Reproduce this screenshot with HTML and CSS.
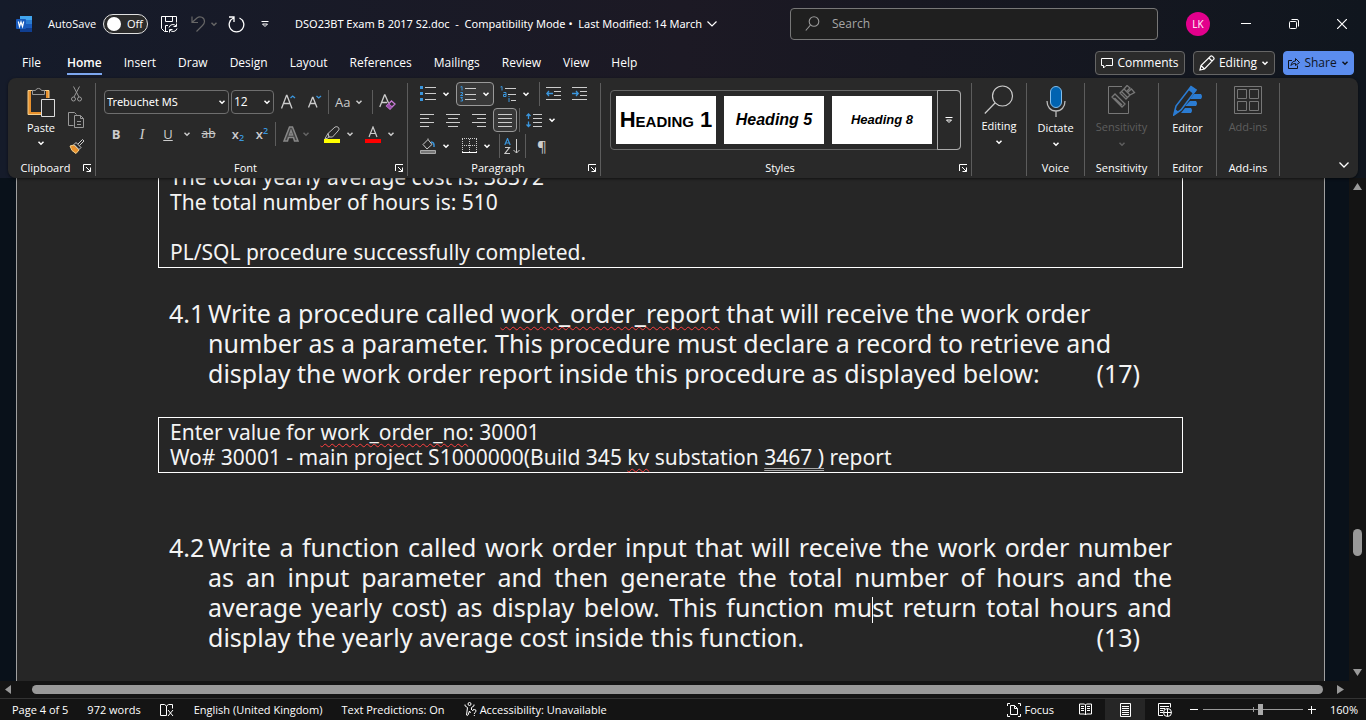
FILE: index.html
```html
<!DOCTYPE html>
<html lang="en-GB">
<head>
<meta charset="utf-8">
<title>DSO23BT Exam B 2017 S2.doc</title>
<link rel="stylesheet" href="styles.css">
</head>
<body>
<svg class="defs" aria-hidden="true">
  <symbol id="chev" viewBox="0 0 8 8"><path d="M1.5 2.8 4 5.2 6.500 2.800" fill="none" stroke="currentColor" stroke-width="1.500"/></symbol>
  <symbol id="launch" viewBox="0 0 9 9"><path d="M.5 7V.5H8M3 3l4.500 4.500M7.500 3.500v4h-4" fill="none" stroke="currentColor"/></symbol>
  <symbol id="overflow" viewBox="0 0 8 8"><path d="M.5 1.500h7" stroke="currentColor"/><path d="M1.500 4 4 6.500 6.500 4z" fill="none" stroke="currentColor"/></symbol>
</svg>
<div class="app">
  <header class="titlebar">
    <div class="quick">
      <svg class="word" width="17" height="16" viewBox="0 0 17 16"><path d="M4 0h12v4H4z" fill="#41a5ee"/><path d="M4 4h12v4H4z" fill="#2b7cd3"/><path d="M4 8h12v4H4z" fill="#185abd"/><path d="M4 12h12v4H4z" fill="#103f91"/><rect y="3" width="10" height="10" rx="1" fill="#185abd"/><path d="m2.300 5.500 1.200 5L5 6l1.500 4.500 1.200-5" fill="none" stroke="#fff" stroke-width="1.200"/></svg>
      <label class="autosave">AutoSave <input type="checkbox" role="switch"><span class="toggle"><span class="knob"></span>Off</span></label>
      <button class="ib save" aria-label="Save"><svg width="17" height="17" viewBox="0 0 17 17" fill="none" stroke="currentColor"><path d="M7 15.500H3.500l-3-3V.5h15v6M4.500.5v5h7v-5M4.500 15.500v-6H7"/><path d="M8 11.500a4 4 0 0 1 7-1.500M15.500 7.500V10.500h-3M16 12.500a4 4 0 0 1-7 1.500M8.500 16.500v-3h3"/></svg></button>
      <button class="ib undo" aria-label="Undo"><svg width="15" height="16" viewBox="0 0 15 16" fill="none" stroke="currentColor" stroke-width="1.200"><path d="M1 .5v6h6M1.500 6 6 2c3-2.500 7.500-.5 7.500 3.500 0 2-1 3-2 4L5.500 15.500"/></svg></button>
      <svg class="c dim"><use href="#chev"/></svg>
      <button class="ib redo" aria-label="Repeat"><svg width="17" height="17" viewBox="0 0 17 17" fill="none" stroke="currentColor" stroke-width="1.300"><path d="M11.500 2A7.300 7.300 0 1 1 5.500 2M1 1h5v5"/></svg></button>
      <button class="ib" aria-label="Customize toolbar"><svg class="c"><use href="#overflow"/></svg></button>
    </div>
    <button class="doctitle">DSO23BT Exam B 2017 S2.doc&nbsp; -&nbsp; Compatibility Mode&nbsp;•&nbsp; Last Modified: 14 March <svg width="10" height="6" viewBox="0 0 10 6"><path d="m.5.5 4.500 4.500L9.500.5" fill="none" stroke="currentColor" stroke-width="1.200"/></svg></button>
    <label class="search"><svg width="15" height="16" viewBox="0 0 15 16" fill="none" stroke="#999" stroke-width="1.100"><circle cx="9" cy="5.500" r="4.800"/><path d="M5.500 9 .8 14.500"/></svg><input type="text" placeholder="Search" aria-label="Search"></label>
    <div class="win">
      <button class="avatar">LK</button>
      <button class="ib" aria-label="Minimize"><svg width="10" height="10"><path d="M0 4.500h10" stroke="currentColor"/></svg></button>
      <button class="ib" aria-label="Restore"><svg width="10" height="10" viewBox="0 0 10 10" fill="none" stroke="currentColor"><rect x=".5" y="2.500" width="7" height="7" rx="1"/><path d="M2.500.5H8A1.500 1.500 0 0 1 9.500 2v5.500"/></svg></button>
      <button class="ib" aria-label="Close"><svg width="10" height="10"><path d="m0 0 10 10M10 0 0 10" stroke="currentColor" stroke-width="1.200"/></svg></button>
    </div>
  </header>
  <nav class="tabs">
    <div class="tablist">
      <button class="file">File</button><button class="active">Home</button><button>Insert</button><button>Draw</button><button>Design</button><button>Layout</button><button>References</button><button>Mailings</button><button>Review</button><button>View</button><button>Help</button>
    </div>
    <div class="actions">
      <button class="comments"><svg width="12" height="11" viewBox="0 0 12 11" fill="none" stroke="currentColor"><path d="M.5.5h11v7H5l-2.500 2.500V7.500h-2z"/></svg>Comments</button>
      <button class="mode"><svg width="16" height="16" viewBox="0 0 16 16" fill="none" stroke="currentColor" stroke-width="1.200"><path d="m1 15 1-4.500L11.500 1.200q1-.8 2 .2l1 1q1 1 .2 2L5.500 14zM10 3l3 3M2 10.500 5.500 14"/></svg>Editing<svg class="c"><use href="#chev"/></svg></button>
      <button class="share"><svg width="12" height="12" viewBox="0 0 12 12" fill="none" stroke="currentColor"><path d="M4 3.500H.5v8h9V8.500M3 8.500c.5-3 2-4.500 4.500-4.500V1.500l4 4-4 3V6.500C5.500 6.500 4 7 3 8.500z"/></svg>Share<svg class="c"><use href="#chev"/></svg></button>
    </div>
  </nav>
  <section class="ribbon" aria-label="Home ribbon">
    <div class="group clipboard">
      <div class="body">
        <button class="big"><svg width="28" height="32" viewBox="0 0 28 32"><path d="M2.500 5v22.500H14M20.500 12V5" fill="none" stroke="#e8912d" stroke-width="3"/><path d="M1 4.500h7M15 4.500h7V12M1 4.500V28.500h13" fill="none" stroke="#f5cf8c"/><path d="M5.500 8.500v-4h3a3.200 3.200 0 0 1 6 0h3v4z" fill="#292929" stroke="#999"/><path d="M14.500 13.500h13v17h-13z" fill="#292929" stroke="#ddd"/></svg><span>Paste</span><svg class="c"><use href="#chev"/></svg></button>
        <div class="stack">
          <button class="ib grey" aria-label="Cut"><svg width="11" height="16" viewBox="0 0 11 16" fill="none" stroke="currentColor"><path d="M2.500.5 8 11M8.500.5 3 11"/><circle cx="2.500" cy="13" r="2"/><circle cx="8.500" cy="13" r="2"/></svg></button>
          <button class="ib grey" aria-label="Copy"><svg width="17" height="16" viewBox="0 0 17 16" fill="none" stroke="currentColor"><path d="M5.500 13.500h-5V.5h6l2 2M6.500 3.500h6l3 3v9h-9zM12.500 3.500v3h3M9 9.500h4M9 12.500h4"/></svg></button>
          <button class="ib" aria-label="Format Painter"><svg width="16" height="15" viewBox="0 0 16 15"><path d="m1 7 4-1 5 5-3 3.500L3 11.500z" fill="#e8912d" stroke="#f8d38c"/><path d="m5 5.500 2-2 5 5-2 2zM9 5l4.500-4.500 1.500 1.500L10.500 6.500" fill="#292929" stroke="#ccc"/></svg></button>
        </div>
      </div>
      <div class="caption"><span>Clipboard</span><button class="ib" aria-label="Clipboard options"><svg class="l"><use href="#launch"/></svg></button></div>
    </div>

    <div class="group font">
      <div class="body col">
        <div class="row r1">
          <span class="combo fontname"><input type="text" value="Trebuchet MS" aria-label="Font"><svg class="c"><use href="#chev"/></svg></span>
          <span class="combo fontsize"><input type="text" value="12" aria-label="Font size"><svg class="c"><use href="#chev"/></svg></span>
          <button class="ib grow" aria-label="Grow font"><svg width="15" height="16" viewBox="0 0 15 16" fill="none"><path d="m.5 14.500 5-13h.5l5 13M2.500 9.500H9" stroke="#ccc" stroke-width="1.300"/><path d="m9.500 4 2.200-2L14 4" stroke="#3a96dd" stroke-width="1.300"/></svg></button>
          <button class="ib shrink" aria-label="Shrink font"><svg width="14" height="14" viewBox="0 0 14 14" fill="none"><path d="m.5 12.500 4-10h.5l4 10M2 8.500h5.500" stroke="#ccc" stroke-width="1.300"/><path d="m8.500 1 2.200 2L13 1" stroke="#3a96dd" stroke-width="1.300"/></svg></button>
          <i class="vr"></i>
          <button class="ib case">Aa<svg class="c"><use href="#chev"/></svg></button>
          <i class="vr"></i>
          <button class="ib" aria-label="Clear formatting"><svg width="17" height="16" viewBox="0 0 17 16" fill="none"><path d="M.8 13 5.500 1H6l3.500 8M2.500 8.500H8" stroke="#ccc" stroke-width="1.300"/><path d="m7.500 12 5-5 3.500 3-5 5zM9.500 10l3.500 3" stroke="#c679d4" stroke-width="1.300"/><path d="m7.500 12 2-2 3.500 3-2 2z" fill="#9c4fb0"/></svg></button>
        </div>
        <div class="row r2">
          <button class="ib b">B</button><button class="ib i">I</button><button class="ib u">U</button><svg class="c"><use href="#chev"/></svg>
          <button class="ib strike"><s>ab</s></button><button class="ib sub">x<sub>2</sub></button><button class="ib sup">x<sup>2</sup></button>
          <i class="vr"></i>
          <button class="ib" aria-label="Text effects"><svg width="16" height="16" viewBox="0 0 16 16"><path d="M1 15 6.500 1h3L15 15h-3.500L10.500 11.500h-5L4.500 15zM6.500 9h3L8 4.500z" fill="#444" stroke="#888" stroke-width="1.500"/></svg></button>
          <svg class="c dim"><use href="#chev"/></svg>
          <button class="ib hl" aria-label="Highlight"><svg width="16" height="17" viewBox="0 0 16 17"><path d="M4 7.500 11 1q2-1 3.500.5T14 5L8.500 11H5zM4 7.500 5 11l-2 1.500H1z" fill="none" stroke="#bbb"/><path d="M0 13h16v4H0z" fill="#ff0"/></svg></button>
          <svg class="c"><use href="#chev"/></svg>
          <button class="ib hl" aria-label="Font colour"><svg width="16" height="17" viewBox="0 0 16 17"><path d="m4 11 4-10 4 10M5.500 7.500h5" fill="none" stroke="#ccc" stroke-width="1.200"/><path d="M0 13h16v4H0z" fill="red"/></svg></button>
          <svg class="c"><use href="#chev"/></svg>
        </div>
      </div>
      <div class="caption"><span>Font</span><button class="ib" aria-label="Font options"><svg class="l"><use href="#launch"/></svg></button></div>
    </div>

    <div class="group para">
      <div class="body col">
        <div class="row p1">
          <button class="ib split" aria-label="Bullets"><svg width="16" height="16" viewBox="0 0 16 16"><path d="M0 0h3v3H0zM0 6h3v3H0zM0 12h3v3H0z" fill="#3a96dd"/><path d="M5 1.500h11M5 7.500h11M5 13.500h11" stroke="#ccc"/></svg><svg class="c"><use href="#chev"/></svg></button>
          <button class="ib split on" aria-label="Numbering"><svg width="16" height="16" viewBox="0 0 16 16"><path d="M5 2.500h11M5 8.500h11M5 13.500h11" stroke="#ccc"/><path d="M.5 1 2 .5v4M.5 6.500h2v1.500l-2 1.500h2.500M.5 11.500h2l-1 1.500 1 .5v1.500H.5" fill="none" stroke="#3a96dd"/></svg><svg class="c"><use href="#chev"/></svg></button>
          <button class="ib split" aria-label="Multilevel list"><svg width="16" height="17" viewBox="0 0 16 17"><path d="M5 2.500h11M8 8.500h8M11 14.500h5" stroke="#ccc"/><path d="M.5 1 2 .5v4M3.500 6.500h2.500v4H3.500V8.500H6M9 12v4M9 10v1" fill="none" stroke="#3a96dd"/></svg><svg class="c"><use href="#chev"/></svg></button>
          <i class="vr"></i>
          <button class="ib" aria-label="Decrease indent"><svg width="15" height="14" viewBox="0 0 15 14" fill="none"><path d="M0 .5h15M8 4.500h7M8 8.500h7M0 12.500h15" stroke="#ccc"/><path d="M7 6.500H.8M3 4 .8 6.500 3 9" stroke="#3a96dd" stroke-width="1.300"/></svg></button>
          <button class="ib" aria-label="Increase indent"><svg width="15" height="14" viewBox="0 0 15 14" fill="none"><path d="M0 .5h15M8 4.500h7M8 8.500h7M0 12.500h15" stroke="#ccc"/><path d="M0 6.500h6.200M4 4l2.200 2.500L4 9" stroke="#3a96dd" stroke-width="1.300"/></svg></button>
        </div>
        <div class="row p2">
          <button class="ib al" aria-label="Align left"><svg width="14" height="13"><path d="M0 .5h14M0 4.500h9M0 8.500h14M0 12.500h9" stroke="#ccc"/></svg></button>
          <button class="ib al" aria-label="Centre"><svg width="14" height="13"><path d="M0 .5h14M2 4.500h10M0 8.500h14M2 12.500h10" stroke="#ccc"/></svg></button>
          <button class="ib al" aria-label="Align right"><svg width="14" height="13"><path d="M0 .5h14M5 4.500h9M0 8.500h14M5 12.500h9" stroke="#ccc"/></svg></button>
          <button class="ib al on" aria-label="Justify"><svg width="14" height="13"><path d="M0 .5h14M0 4.500h14M0 8.500h14M0 12.500h14" stroke="#ccc"/></svg></button>
          <i class="vr"></i>
          <button class="ib split" aria-label="Line spacing"><svg width="16" height="15" viewBox="0 0 16 15" fill="none"><path d="M7 1.500h9M7 5.500h9M7 9.500h9M7 13.500h9" stroke="#ccc"/><path d="M2.500 1v5M.5 3l2-2 2 2M2.500 8.500v5M.5 11.500l2 2 2-2" stroke="#3a96dd" stroke-width="1.300"/></svg><svg class="c"><use href="#chev"/></svg></button>
        </div>
        <div class="row p3">
          <button class="ib split" aria-label="Shading"><svg width="16" height="16" viewBox="0 0 16 16" fill="none"><path d="m3 6.500 5-5 4 5-5 4.500zM8 1.500V.5" stroke="#ccc"/><path d="M11 4q3.500 0 3 5" stroke="#3a96dd" stroke-width="1.500"/><path d="M.5 12.500h15v3H.5z" fill="#777" stroke="#aaa"/></svg><svg class="c"><use href="#chev"/></svg></button>
          <button class="ib split" aria-label="Borders"><svg width="15" height="16" viewBox="0 0 15 16" fill="none" stroke="#ccc"><path d="M0 .5h15M.5 1v13M14.500 1v13M7.500 1v13M0 7.500h15" stroke-dasharray="1 1"/><path d="M0 14.500h15" stroke="#fff"/></svg><svg class="c"><use href="#chev"/></svg></button>
          <i class="vr"></i>
          <button class="ib" aria-label="Sort"><svg width="17" height="17" viewBox="0 0 17 17" fill="none"><path d="m.8 7 2.700-6.500L6.200 7M1.500 5h4" stroke="#3a96dd" stroke-width="1.200"/><path d="M1 9.500h4.500l-4.500 6h5" stroke="#ccc" stroke-width="1.200"/><path d="M12.500 1v14M9.500 12l3 3 3-3" stroke="#ccc"/></svg></button>
          <i class="vr"></i>
          <button class="ib pil">¶</button>
        </div>
      </div>
      <div class="caption"><span>Paragraph</span><button class="ib" aria-label="Paragraph options"><svg class="l"><use href="#launch"/></svg></button></div>
    </div>

    <div class="group styles">
      <div class="body">
        <div class="gallery"><button class="tile h1">Heading 1</button><button class="tile h5">Heading 5</button><button class="tile h8">Heading 8</button><button class="more" aria-label="More styles"><svg class="c"><use href="#overflow"/></svg></button></div>
      </div>
      <div class="caption"><span>Styles</span><button class="ib" aria-label="Styles options"><svg class="l"><use href="#launch"/></svg></button></div>
    </div>

    <div class="group editing"><div class="body"><button class="big"><svg width="30" height="30" viewBox="0 0 30 30" fill="none" stroke="#ccc" stroke-width="1.200"><circle cx="18.500" cy="11" r="10"/><path d="M11 18 .8 28.500"/></svg><span>Editing</span><svg class="c"><use href="#chev"/></svg></button></div></div>
    <div class="group voice"><div class="body"><button class="big"><svg width="20" height="32" viewBox="0 0 20 32"><rect x="4.500" y="1.500" width="11" height="21" rx="5.500" fill="#0063b1" stroke="#83beec"/><path d="M1 16c0 6 3.500 10 9 10s9-4 9-10M10 26v6" fill="none" stroke="#bbb" stroke-width="1.300"/></svg><span>Dictate</span><svg class="c"><use href="#chev"/></svg></button></div><div class="caption"><span>Voice</span></div></div>
    <div class="group sens"><div class="body"><button class="big" disabled><svg width="28" height="30" viewBox="0 0 28 30" fill="none" stroke="#777"><path d="M14 1.500H.5v27h20V16"/><path d="m4 12 3-3 10 10-3 3zM6.500 13l7.500 7M12 8l4-4 6 6-4 4zM16 4l3-3.500 3 2.500-3 3M20 7l3.500-3 3 3.500-4.500 2.500M13.500 6.500l6 6" stroke-width="1.300"/></svg><span>Sensitivity</span><svg class="c"><use href="#chev"/></svg></button></div><div class="caption"><span>Sensitivity</span></div></div>
    <div class="group editor"><div class="body"><button class="big"><svg width="30" height="31" viewBox="0 0 30 31"><path d="M21 9h7q2 2.500 0 5H17zM17 16h6q2 2.500 0 5H12zM12 23h6q2 2.500 0 5H8z" fill="#2b7cd3"/><path d="M.8 30 3 21 18 1.500l5 3.500L8 25z" fill="#292929" stroke="#2b7cd3" stroke-width="1.600"/><path d="m15.500 5 2.500-4 5.500 4-3 4zM.8 30l1.500-6 3.500 3z" fill="#2b7cd3"/></svg><span>Editor</span></button></div><div class="caption"><span>Editor</span></div></div>
    <div class="group addins"><div class="body"><button class="big" disabled><svg width="28" height="30" viewBox="0 0 28 30" fill="none" stroke="#777"><path d="M.5 1.500h27v27H.5zM3.500 4.500h9v9h-9zM15.500 4.500h9v9h-9zM3.500 16.500h9v9h-9zM15.500 16.500h9v9h-9z"/></svg><span>Add-ins</span></button></div><div class="caption"><span>Add-ins</span></div></div>
    <div class="tail"><button class="ib" aria-label="Collapse ribbon"><svg width="10" height="6" viewBox="0 0 10 6"><path d="m.5.5 4.500 4.500L9.500.5" fill="none" stroke="currentColor" stroke-width="1.300"/></svg></button></div>
  </section>

  <main class="work">
    <article class="page">
      <div class="box first">
        <p>The total yearly average cost is: 38372</p>
        <p>The total number of hours is: 510</p>
        <p>&nbsp;</p>
        <p>PL/SQL procedure successfully completed.</p>
      </div>
      <div class="question q1"><span>4.1</span>
        <div><p>Write a procedure called <span class="sp">work_order_report</span> that will receive the work order</p><p>number as a parameter. This procedure must declare a record to retrieve and</p><p class="end"><span>display the work order report inside this procedure as displayed below:</span><span>(17)</span></p></div>
      </div>
      <div class="box second">
        <p>Enter value for <span class="sp">work_order_no</span>: 30001</p>
        <p>Wo# 30001 - main project S1000000(Build 345 <span class="sp">kv</span> substation <span class="gr">3467 )</span> report</p>
      </div>
      <div class="question q2"><span>4.2</span>
        <div><p class="just">Write a function called work order input that will receive the work order number</p><p class="just">as an input parameter and then generate the total number of hours and the</p><p class="just">average yearly cost) as display below. This function mu<span class="caret"></span>st return total hours and</p><p class="end"><span>display the yearly average cost inside this function.</span><span>(13)</span></p></div>
      </div>
    </article>
    <div class="vscroll"><svg width="9" height="7"><path d="M4.500 0 9 7H0z" fill="#999"/></svg><span class="vthumb"></span><svg width="9" height="7"><path d="M4.500 7 9 0H0z" fill="#999"/></svg></div>
  </main>
  <div class="hscroll"><svg width="6" height="9"><path d="M0 4.500 6 0v9z" fill="#999"/></svg><span class="hthumb"></span><svg width="7" height="9"><path d="M7 4.500 0 0v9z" fill="#999"/></svg></div>
  <footer class="status">
    <div class="left">
      <span>Page 4 of 5</span><span>972 words</span>
      <svg width="15" height="14" viewBox="0 0 15 14" fill="none" stroke="currentColor"><path d="M6.500 12.500h-6V1.500h4l2 1.500v9.500M6.500 3l2-1.500h4v4M8 7l5 6M13 7l-5 6"/></svg>
      <span>English (United Kingdom)</span><span>Text Predictions: On</span>
      <span class="acc"><svg width="13" height="15" viewBox="0 0 13 15" fill="none" stroke="currentColor"><circle cx="5.500" cy="2" r="1.500"/><path d="M1 2.500Q0 4 3.500 5.500L2.500 13q1 1 1.500 0l1.500-4 1 2M10 2.500Q11 4 7.500 5.500V8"/><path d="M8.500 9q0-1.500 1.800-1.500T12 9c0 1.500-1.700 1-1.700 3M10.300 13v1"/></svg>Accessibility: Unavailable</span>
    </div>
    <div class="right">
      <button class="ib focus"><svg width="14" height="14" viewBox="0 0 14 14" fill="none" stroke="currentColor"><path d="M3 .5H.5V3M11 .5h2.500V3M3 13.500H.5V11M11 13.500h2.500V11M3.500 2.500h4l3 3v6h-7zM7.500 2.500v3h3"/></svg>Focus</button>
      <button class="ib view" aria-label="Read mode"><svg width="13" height="13" viewBox="0 0 13 13" fill="none" stroke="currentColor"><path d="M.5 1h5l1 1 1-1h5v10h-5l-1 1-1-1h-5zM6.500 2v10M2 3.500h3M2 5.500h3M2 7.500h3M8 3.500h3M8 5.500h3M8 7.500h3"/></svg></button>
      <button class="ib view on" aria-label="Print layout"><svg width="11" height="14" viewBox="0 0 11 14" fill="none" stroke="currentColor"><path d="M.5.5h10v13H.5zM2 3.500h7M2 5.500h7M2 7.500h7M2 9.500h7M2 11.500h7"/></svg></button>
      <button class="ib view" aria-label="Web layout"><svg width="14" height="14" viewBox="0 0 14 14" fill="none" stroke="currentColor"><path d="M5 12.500H.5V.5h12v4M2 3.500h9M2 5.500h5M2 7.500h3M2 9.500h3"/><circle cx="9.500" cy="9.500" r="4"/><path d="M5.500 9.500h8M9.500 5.500v8"/></svg></button>
      <button class="ib zoomb" aria-label="Zoom out"><svg width="8" height="8"><path d="M0 3.500h8" stroke="currentColor"/></svg></button>
      <input class="zoom" type="range" min="0" max="100" value="58" aria-label="Zoom">
      <button class="ib zoomb" aria-label="Zoom in"><svg width="8" height="8"><path d="M0 3.500h8M3.500 0v8" stroke="currentColor"/></svg></button>
      <button class="ib pct">160%</button>
    </div>
  </footer>
</div>
</body>
</html>
```
FILE: styles.css
```css
* { box-sizing: border-box; }
body { margin: 0; background: #141414; color: #fff; font: 12px/16px "Open Sans", "Noto Sans", sans-serif; }
button, input { font: inherit; color: inherit; border: 0; background: none; padding: 0; margin: 0; }
button { white-space: nowrap; }
p { margin: 0; }
svg { flex: none; display: block; }
.defs { position: absolute; width: 0; height: 0; }
.c { width: 8px; height: 8px; }
.l { width: 9px; height: 9px; }
.dim { color: #666; }
.ib { display: inline-flex; align-items: center; justify-content: center; flex: none; }
.app { height: 100vh; display: flex; flex-direction: column; background: linear-gradient(90deg, #151b2a, #1c1924 50%, #10161e); }

.titlebar { height: 48px; flex: none; display: flex; align-items: center; padding: 0 16px; font-size: 11px; }
.quick { display: flex; align-items: center; width: 279px; flex: none; }
.autosave { display: flex; align-items: center; gap: 7px; margin-left: 15px; }
.autosave input { position: absolute; opacity: 0; }
.toggle { display: flex; align-items: center; gap: 6px; width: 45px; height: 20px; padding: 0 3px; border: 1px solid #e0e0e0; border-radius: 10px; background: #2b2b2b; }
.knob { width: 14px; height: 14px; border-radius: 50%; background: #fff; }
.save { margin-left: 13px; }
.undo { margin: 0 4px 0 13px; color: #666; }
.redo { margin: 0 16px 0 10px; }
.doctitle { display: flex; align-items: center; gap: 5px; font-family: "Noto Sans", sans-serif; }
.search { display: flex; align-items: center; gap: 12px; margin-left: auto; width: 368px; height: 32px; padding: 0 14px; border: 1px solid #777; border-radius: 4px; background: #1f1f1f; font-size: 12px; }
.search input { min-width: 0; flex: 1; }
.search input::placeholder { color: #a6a6a6; opacity: 1; }
.win { display: flex; align-items: center; gap: 38px; margin-left: 28px; padding-right: 3px; }
.avatar { width: 24px; height: 24px; margin-right: -7px; border-radius: 50%; background: #e3008c; font-size: 10px; }

.tabs { height: 30px; flex: none; display: flex; justify-content: space-between; padding: 0 12px 0 22px; }
.tablist { display: flex; gap: 22px; }
.tablist button { height: 27px; padding-top: 5px; border-bottom: 2px solid transparent; }
.tablist .file { margin-right: 4px; }
.tablist .active { font-weight: 600; border-color: #7da7f0; }
.actions { display: flex; gap: 8px; padding-top: 3px; }
.actions button { display: flex; align-items: center; justify-content: center; gap: 4px; height: 24px; padding: 0 4px; border: 1px solid #666; border-radius: 4px; background: #2b2b2b; }
.comments { width: 90px; }
.mode { width: 82px; }
.actions .share { width: 71px; background: #5b8def; border-color: #5b8def; color: #10141c; }

.ribbon { height: 100px; flex: none; margin: 0 8px; display: flex; background: #292929; border-radius: 8px; padding: 5px 0 2px; position: relative; z-index: 1; font-size: 11px; box-shadow: 0 1px 3px #0008; }
.group { display: flex; flex-direction: column; flex: none; border-right: 1px solid #5c5c5c; }
.body { flex: 1; display: flex; min-height: 0; }
.col { flex-direction: column; }
.row { display: flex; align-items: center; }
.caption { display: flex; height: 16px; align-items: center; padding-right: 3px; }
.caption span { flex: 1; text-align: center; }
.clipboard { width: 88px; }
.font { width: 312px; }
.para { width: 193px; }
.styles { flex: 1 1 371px; }
.editing { width: 55px; }
.voice { width: 58px; }
.sens { width: 74px; }
.editor { width: 58px; }
.addins { width: 63px; }
.voice .caption, .sens .caption, .editor .caption, .addins .caption { padding: 0; }
.big { flex: 1; display: flex; flex-direction: column; align-items: center; gap: 3px; padding-top: 2px; }
.big:disabled { color: #5e5e5e; }
.sens .big, .editor .big, .addins .big { gap: 4px; }
.big .c { margin-top: 1px; }
.clipboard .big { gap: 2px; padding: 3px 0 0 9px; flex: none; width: 57px; }
.stack { display: flex; flex-direction: column; align-items: center; gap: 10px; padding: 3px 0 0 3px; }
.stack .ib { height: 16px; }
.grey { color: #999; }
.vr { width: 1px; height: 24px; background: #5c5c5c; flex: none; }
.r1 { height: 24px; margin-top: 7px; padding-left: 8px; }
.combo { display: flex; align-items: center; height: 24px; border: 1px solid #6e6e6e; border-radius: 4px; padding: 0 2px; font-size: 12px; }
.combo input { flex: 1; min-width: 0; width: 20px; }
.fontname { width: 125px; font-size: 11px; font-family: "Noto Sans", sans-serif; }
.fontsize { width: 43px; margin: 0 7px 0 2px; }
.shrink { margin: 0 6px 0 12px; }
.case { gap: 5px; margin: 0 9px 0 6px; color: #ccc; font-size: 13px; }
.r1 .vr + .ib:last-child { margin-left: 6px; }
.r2 { height: 24px; margin-top: 8px; padding-left: 9px; color: #ccc; font-size: 13px; }
.b { width: 22px; font-weight: 700; }
.i { width: 30px; font: italic 15px "Liberation Serif", serif; }
.u { width: 22px; margin-right: 4px; text-decoration: underline; }
.strike { width: 35px; font-size: 12px; }
.sub, .sup { width: 24px; font-weight: 600; }
.sub sub, .sup sup { color: #3a96dd; font-size: 9px; line-height: 9px; }
.sub sub { align-self: flex-end; }
.sup sup { align-self: flex-start; }
.r2 .vr { margin: 0 7px 0 1px; }
.r2 .dim { margin: 0 14px 0 3px; }
.r2 .hl { margin-right: 6px; }
.r2 .hl ~ .hl { margin-left: 11px; }
.p1, .p2, .p3 { height: 26px; padding-left: 8px; gap: 2px; }
.p1 { height: 22px; margin-bottom: 2px; }
.split { gap: 6px; height: 24px; padding: 0 3px; border: 1px solid transparent; border-radius: 4px; }
.on { background: #383838; border: 1px solid #999; border-radius: 4px; }
.p1 .vr { margin-left: 3px; }
.p1 .vr + .ib { margin: 0 9px 0 4px; }
.al { width: 24px; height: 24px; }
.p2 { padding-left: 7px; }
.p3 { gap: 4px; }
.p3 .ib:last-child { margin-left: 7px; }
.pil { font-size: 15px; color: #ccc; }
.gallery { flex: 1; display: flex; height: 60px; margin: 7px 10px 0 9px; border: 1px solid #666; border-radius: 4px; align-items: center; padding-left: 5px; gap: 8px; }
.tile { flex: 1; min-width: 0; height: 48px; background: #fff; color: #000; font-family: "Liberation Sans", Arial, sans-serif; font-weight: 700; }
.h1 { font-variant: small-caps; font-size: 22px; }
.h5 { font-style: italic; font-size: 16px; }
.h8 { font-style: italic; font-size: 13px; }
.more { display: flex; align-items: center; justify-content: center; width: 24px; height: 60px; margin: 0 -1px 0 -3px; border: 1px solid #aaa; border-radius: 0 4px 4px 0; }
.tail { width: 78px; display: flex; align-items: flex-end; justify-content: flex-end; padding: 0 9px 8px 0; }

.work { flex: 1; min-height: 0; display: flex; overflow: hidden; background: #09111a; }
.page { flex: 1; margin-left: 16px; margin-right: 24px; padding: 0 141px; background: #262626; border: solid #a0a0a0; border-width: 0 1px; font-family: "Noto Sans", "Open Sans", sans-serif; color: #f4f4f4; min-width: 0; }
.page p { white-space: nowrap; }
.box { border: 1px solid #fff; padding: 2px 11px; font-size: 21px; line-height: 25px; }
.first { margin-top: -16px; }
.question { display: flex; font-size: 25px; line-height: 30px; padding: 0 11px; }
.question > span { width: 39px; flex: none; }
.question > div { flex: 1; min-width: 0; }
.q1 { margin: 30px 0 29px; }
.q2 { margin-top: 59px; }
.end { display: flex; justify-content: space-between; padding-right: 32px; }
.just { text-align: justify; text-align-last: justify; }
.page .just { white-space: normal; }
.sp { text-decoration: underline wavy #ff4040 1px; text-underline-offset: 3px; text-decoration-skip-ink: none; }
.gr { text-decoration: underline double #aaa 1px; text-underline-offset: 3px; }
.caret { display: inline-block; width: 1px; height: 26px; margin: -4px -1px -4px 0; background: #fff; vertical-align: middle; }
.vscroll { width: 17px; display: flex; flex-direction: column; align-items: center; padding: 5px 0; background: #141414; }
.vthumb { width: 9px; height: 27px; border-radius: 5px; background: #999; margin: auto; flex: none; }
.vscroll .vthumb { margin-top: 339px; }
.hscroll { height: 17px; flex: none; display: flex; align-items: center; gap: 14px; padding: 0 22px 0 5px; background: #141414; }
.hthumb { flex: 1; height: 9px; margin-left: 7px; border-radius: 5px; background: #999; }
.status { height: 22px; flex: none; display: flex; justify-content: space-between; border-top: 1px solid #333; background: #141414; font-size: 11px; }
.left, .right { display: flex; align-items: center; }
.left { padding-left: 12px; gap: 19px; white-space: nowrap; }
.acc, .focus { display: flex; align-items: center; gap: 3px; }
.right { padding-right: 8px; }
.focus { margin-right: 11px; }
.view { width: 40px; height: 21px; }
.view.on { border: 0; border-radius: 0; background: #262626; }
.zoomb { margin: 0 5px; }
.zoom { appearance: none; width: 100px; height: 12px; background: linear-gradient(#999, #999) center / 100% 1px no-repeat, linear-gradient(#999, #999) center / 1px 5px no-repeat; }
.zoom::-webkit-slider-thumb { appearance: none; width: 5px; height: 11px; background: #aaa; }
.pct { margin-left: 9px; }
```
